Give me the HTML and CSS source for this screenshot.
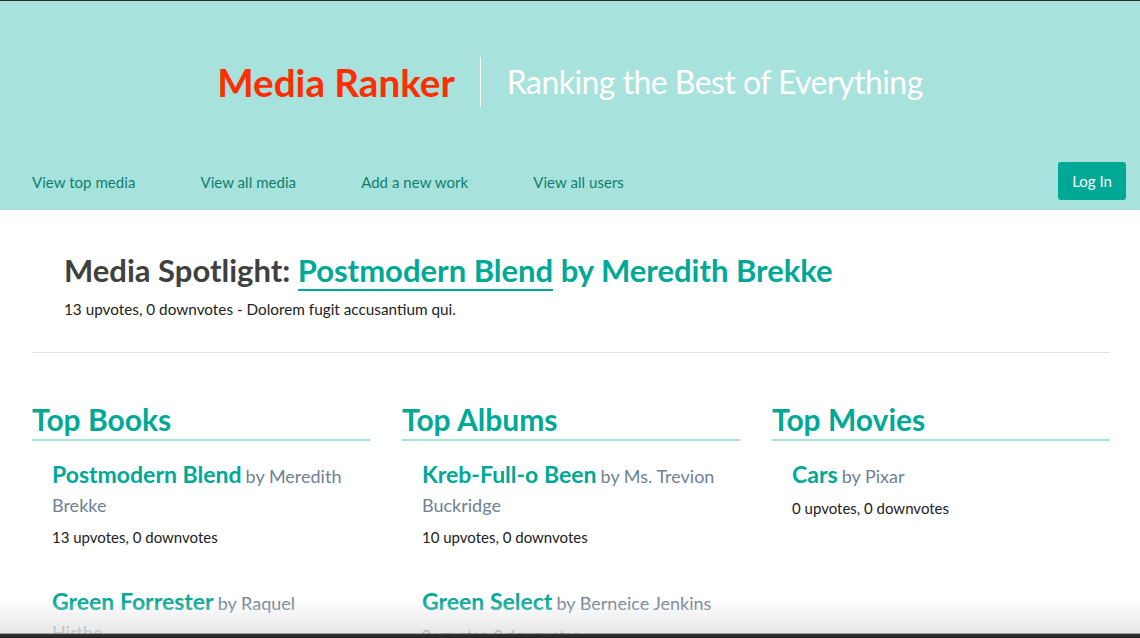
FILE: index.html
```html
<!DOCTYPE html>
<html lang="en">
<head>
<meta charset="utf-8">
<title>Media Ranker</title>
<link rel="stylesheet" href="styles.css">
</head>
<body>
<header class="site-header">
  <div class="brand">
    <h1 class="brand-title">Media Ranker</h1>
    <span class="brand-tagline">Ranking the Best of Everything</span>
  </div>
  <nav class="site-nav">
    <ul class="nav-links">
      <li><a href="#">View top media</a></li>
      <li><a href="#">View all media</a></li>
      <li><a href="#">Add a new work</a></li>
      <li><a href="#">View all users</a></li>
    </ul>
    <a class="login-btn" href="#">Log In</a>
  </nav>
</header>
<main class="content">
  <section class="spotlight">
    <h2 class="spotlight-title">Media Spotlight: <a href="#" class="spotlight-link">Postmodern Blend</a> <span class="spotlight-by">by Meredith Brekke</span></h2>
    <p class="spotlight-meta">13 upvotes, 0 downvotes - Dolorem fugit accusantium qui.</p>
  </section>
  <hr class="divider">
  <section class="top-lists">
    <div class="top-col">
      <h3 class="col-title">Top Books</h3>
      <ul class="work-list">
        <li class="work">
          <p class="work-head"><a href="#" class="work-title">Postmodern Blend</a> <span class="work-by">by Meredith Brekke</span></p>
          <p class="work-votes">13 upvotes, 0 downvotes</p>
        </li>
        <li class="work">
          <p class="work-head"><a href="#" class="work-title">Green Forrester</a> <span class="work-by">by Raquel Hirthe</span></p>
          <p class="work-votes">9 upvotes, 0 downvotes</p>
        </li>
      </ul>
    </div>
    <div class="top-col">
      <h3 class="col-title">Top Albums</h3>
      <ul class="work-list">
        <li class="work">
          <p class="work-head"><a href="#" class="work-title">Kreb-Full-o Been</a> <span class="work-by">by Ms. Trevion Buckridge</span></p>
          <p class="work-votes">10 upvotes, 0 downvotes</p>
        </li>
        <li class="work">
          <p class="work-head"><a href="#" class="work-title">Green Select</a> <span class="work-by">by Berneice Jenkins</span></p>
          <p class="work-votes">9 upvotes, 0 downvotes</p>
        </li>
      </ul>
    </div>
    <div class="top-col">
      <h3 class="col-title">Top Movies</h3>
      <ul class="work-list">
        <li class="work">
          <p class="work-head"><a href="#" class="work-title">Cars</a> <span class="work-by">by Pixar</span></p>
          <p class="work-votes">0 upvotes, 0 downvotes</p>
        </li>
      </ul>
    </div>
  </section>
</main>
<div class="screen-fade"></div>
</body>
</html>
```
FILE: styles.css
```css
* { box-sizing: border-box; }
html, body { margin: 0; padding: 0; }
body {
  font-family: Lato, "Open Sans", sans-serif;
  color: #222;
  background: #fff;
  border-top: 1px solid #2a2a2a;
}
a { text-decoration: none; }

.site-header {
  background: #a8e2dc;
  height: 209px;
  display: flex;
  flex-direction: column;
  padding: 56px 14px 10px 32px;
}
.brand {
  display: flex;
  justify-content: center;
  align-items: center;
  height: 50px;
  padding-right: 18px;
}
.brand-title {
  margin: 0;
  font-size: 38.6px;
  font-weight: 700;
  color: #ff2e00;
  padding-right: 25px;
  line-height: 50px;
}
.brand-tagline {
  border-left: 1px solid #fff;
  padding-left: 26px;
  line-height: 50px;
  font-size: 32px;
  color: #fff;
  font-weight: 400;
  letter-spacing: -0.55px;
}
.site-nav {
  margin-top: auto;
  display: flex;
  align-items: center;
  justify-content: space-between;
}
.nav-links {
  list-style: none;
  margin: 0;
  padding: 0;
  display: flex;
  gap: 65px;
}
.nav-links a {
  color: #0e7f6f;
  font-size: 15px;
  letter-spacing: 0.05px;
}
.login-btn {
  background: #00a896;
  color: #fff;
  font-size: 15px;
  height: 38px;
  width: 68px;
  display: flex;
  align-items: center;
  justify-content: center;
  border-radius: 3px;
}

.content {
  padding: 0 30px 40px 32px;
}
.spotlight {
  padding: 40px 32px 0;
}
.spotlight-title {
  margin: 0;
  font-size: 31px;
  line-height: 40px;
  font-weight: 700;
  color: #404040;
}
.spotlight-link {
  color: #00a896;
  border-bottom: 2px solid #00a896;
}
.spotlight-by { color: #00a896; }
.spotlight-meta {
  margin: 10px 0 0;
  font-size: 15.3px;
  color: #222;
}
.divider {
  margin: 34px 0 0;
  border: 0;
  border-top: 1px solid #e2e2e2;
}
.top-lists {
  display: grid;
  grid-template-columns: repeat(3, 1fr);
  gap: 32px;
  padding-top: 48px;
}
.col-title {
  margin: 0;
  font-size: 30px;
  font-weight: 700;
  color: #00a896;
  line-height: 36px;
  padding-bottom: 2px;
  border-bottom: 2px solid #a8e2dc;
}
.work-list {
  list-style: none;
  margin: 0;
  padding: 19px 20px 0 20px;
}
.work { margin-bottom: 41px; }
.work-head {
  margin: 0;
  line-height: 29px;
}
.work-title {
  font-size: 23px;
  font-weight: 700;
  color: #00a896;
}
.work-by {
  font-size: 18px;
  color: #6f8193;
}
.work-votes {
  margin: 8px 0 0;
  font-size: 15px;
  color: #222;
}
.screen-fade {
  position: fixed;
  left: 0;
  right: 0;
  bottom: 0;
  height: 40px;
  background: linear-gradient(to bottom, rgba(225,225,225,0) 0%, rgba(225,225,225,0.8) 88%, #333 90%, #222 100%);
  pointer-events: none;
}
```
